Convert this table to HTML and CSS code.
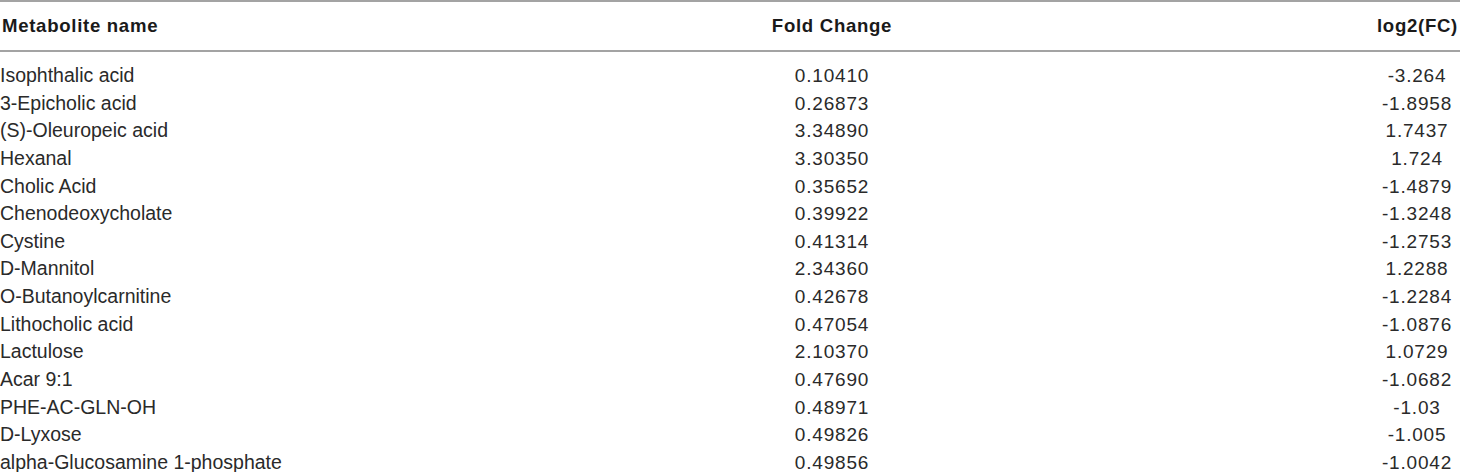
FILE: index.html
```html
<!DOCTYPE html>
<html>
<head>
<meta charset="utf-8">
<link rel="stylesheet" href="styles.css">
</head>
<body>
<table class="data">
  <colgroup>
    <col class="c-name">
    <col class="c-fc">
    <col class="c-log">
  </colgroup>
  <thead>
    <tr>
      <th class="h-name">Metabolite name</th>
      <th class="h-fc">Fold Change</th>
      <th class="h-log">log2(FC)</th>
    </tr>
  </thead>
  <tbody>
    <tr><td class="name">Isophthalic acid</td><td class="num">0.10410</td><td class="num">-3.264</td></tr>
    <tr><td class="name">3-Epicholic acid</td><td class="num">0.26873</td><td class="num">-1.8958</td></tr>
    <tr><td class="name">(S)-Oleuropeic acid</td><td class="num">3.34890</td><td class="num">1.7437</td></tr>
    <tr><td class="name">Hexanal</td><td class="num">3.30350</td><td class="num">1.724</td></tr>
    <tr><td class="name">Cholic Acid</td><td class="num">0.35652</td><td class="num">-1.4879</td></tr>
    <tr><td class="name">Chenodeoxycholate</td><td class="num">0.39922</td><td class="num">-1.3248</td></tr>
    <tr><td class="name">Cystine</td><td class="num">0.41314</td><td class="num">-1.2753</td></tr>
    <tr><td class="name">D-Mannitol</td><td class="num">2.34360</td><td class="num">1.2288</td></tr>
    <tr><td class="name">O-Butanoylcarnitine</td><td class="num">0.42678</td><td class="num">-1.2284</td></tr>
    <tr><td class="name">Lithocholic acid</td><td class="num">0.47054</td><td class="num">-1.0876</td></tr>
    <tr><td class="name">Lactulose</td><td class="num">2.10370</td><td class="num">1.0729</td></tr>
    <tr><td class="name">Acar 9:1</td><td class="num">0.47690</td><td class="num">-1.0682</td></tr>
    <tr><td class="name">PHE-AC-GLN-OH</td><td class="num">0.48971</td><td class="num">-1.03</td></tr>
    <tr><td class="name">D-Lyxose</td><td class="num">0.49826</td><td class="num">-1.005</td></tr>
    <tr><td class="name">alpha-Glucosamine 1-phosphate</td><td class="num">0.49856</td><td class="num">-1.0042</td></tr>
  </tbody>
</table>
</body>
</html>
```
FILE: styles.css
```css
html, body {
  margin: 0;
  padding: 0;
  background: #ffffff;
}
body {
  font-family: "Liberation Sans", Arial, sans-serif;
  color: #2a2a2a;
  overflow: hidden;
}
.data {
  width: 1460px;
  border-collapse: collapse;
  table-layout: fixed;
}
.c-name { width: 290px; }
.c-fc { width: 1084px; }
.c-log { width: 86px; }
.data th {
  font-size: 18.6px;
  font-weight: bold;
  letter-spacing: 0.7px;
  color: #1a1a1a;
  height: 48px;
  padding: 0;
  border-top: 2px solid #a3a3a3;
  border-bottom: 2px solid #a3a3a3;
  vertical-align: middle;
  text-align: center;
}
.data th.h-name {
  text-align: left;
  padding-left: 2px;
}
.data th.h-log {
  text-align: right;
  padding-right: 2px;
}
.data td {
  font-size: 19px;
  line-height: 27.64px;
  height: 27.64px;
  padding: 0;
  white-space: nowrap;
}
.data tbody tr:first-child td {
  padding-top: 10px;
}
.data td.name {
  text-align: left;
  padding-left: 0;
  font-size: 19.5px;
  letter-spacing: 0;
}
.data td.num {
  text-align: center;
  letter-spacing: 0.8px;
}
```
